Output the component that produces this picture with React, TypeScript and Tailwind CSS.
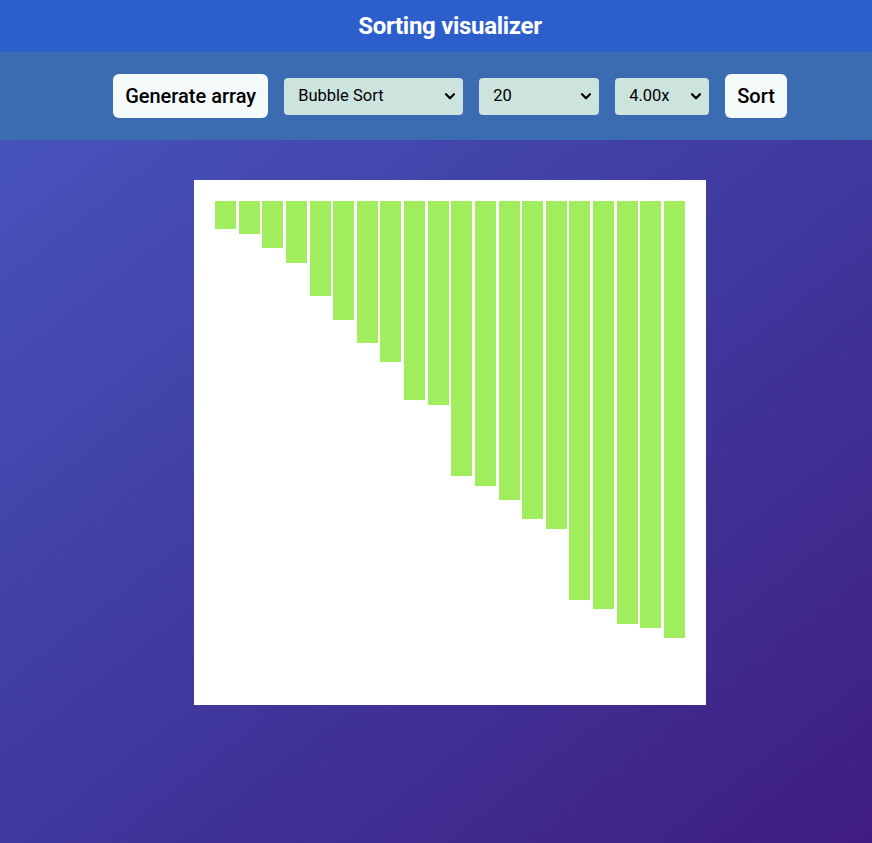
import React, { useState } from 'react';

const heights = [28, 33, 47, 62, 95, 119, 142, 161, 199, 204, 275, 285, 299, 318, 328, 399, 408, 423, 427, 437];

function Chevron() {
  return (
    <svg
      className="pointer-events-none absolute right-[6px] top-1/2 h-[14px] w-[14px] -translate-y-1/2"
      viewBox="0 0 16 16"
      fill="none"
      stroke="black"
      strokeWidth="2.6"
      strokeLinecap="round"
      strokeLinejoin="round"
    >
      <path d="M3.5 6 L8 10.5 L12.5 6" />
    </svg>
  );
}

function Select({ width, value, options }: { width: string; value: string; options: string[] }) {
  return (
    <div className={`relative ${width}`}>
      <select
        defaultValue={value}
        className="h-[37px] w-full cursor-pointer appearance-none rounded-[4px] bg-[#cde3de] pl-[14px] text-[16.5px] text-black outline-none"
      >
        {options.map((o) => (
          <option key={o} value={o}>
            {o}
          </option>
        ))}
      </select>
      <Chevron />
    </div>
  );
}

export default function App() {
  const [bars] = useState(heights);

  return (
    <div className="flex min-h-[843px] w-[900px] flex-col font-['Roboto','Liberation_Sans',sans-serif]">
      {/* header */}
      <header className="flex h-[52px] items-center justify-center bg-[#2d5fcc]">
        <h1 className="text-[24px] font-bold tracking-[-0.3px] text-white">Sorting visualizer</h1>
      </header>

      {/* controls */}
      <div className="flex h-[88px] items-center justify-center gap-4 bg-[#3b6cb1]">
        <button className="h-[44px] rounded-[6px] bg-[#f4f9fa] px-[12px] text-[20px] font-medium text-black">
          Generate array
        </button>
        <Select width="w-[179px]" value="Bubble Sort" options={['Bubble Sort', 'Selection Sort', 'Insertion Sort', 'Merge Sort', 'Quick Sort']} />
        <Select width="w-[120px]" value="20" options={['10', '20', '50', '100']} />
        <Select width="w-[94px]" value="4.00x" options={['0.25x', '0.50x', '1.00x', '2.00x', '4.00x']} />
        <button className="h-[44px] rounded-[6px] bg-[#f4f9fa] px-[12px] text-[20px] font-medium text-black">
          Sort
        </button>
      </div>

      {/* canvas */}
      <main className="flex flex-1 justify-center bg-gradient-to-br from-[#4753bb] via-[#3f389d] to-[#3f1b7f] pt-10">
        <div className="h-[525px] w-[512px] bg-white px-[21px] py-[21px]">
          <div className="flex items-start justify-between">
            {bars.map((h, i) => (
              <div key={i} className="w-[21px] bg-[#a0ed5e]" style={{ height: h }} />
            ))}
          </div>
        </div>
      </main>
    </div>
  );
}
